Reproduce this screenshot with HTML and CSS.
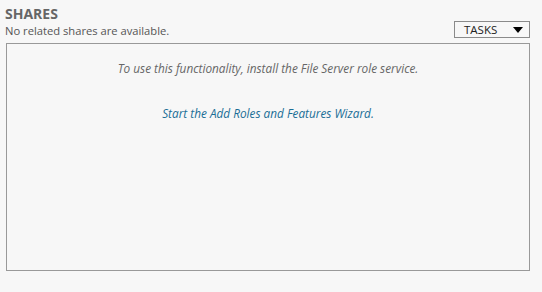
FILE: index.html
```html
<!DOCTYPE html>
<html>
<head>
<meta charset="utf-8">
<link rel="stylesheet" href="styles.css">
</head>
<body>
<div class="panel">
  <div class="header">
    <div class="titles">
      <div class="title">SHARES</div>
      <div class="subtitle">No related shares are available.</div>
    </div>
    <div class="tasks">
      <span class="tasks-label">TASKS</span>
      <svg class="caret" width="10" height="6" viewBox="0 0 10 6"><path d="M0 0H10L5 6Z" fill="#000"/></svg>
    </div>
  </div>
  <div class="box">
    <p class="note">To use this functionality, install the File Server role service.</p>
    <p class="link">Start the Add Roles and Features Wizard.</p>
  </div>
</div>
</body>
</html>
```
FILE: styles.css
```css
html, body {
  margin: 0;
  padding: 0;
  background: #f7f7f7;
  font-family: "Open Sans", "Noto Sans", sans-serif;
}
.panel {
  width: 525px;
  padding: 5px 0 0 5px;
}
.header {
  display: flex;
  justify-content: space-between;
  align-items: flex-end;
}
.title {
  font-size: 14px;
  font-weight: 700;
  color: #666;
  line-height: 18px;
}
.subtitle {
  font-size: 11.2px;
  color: #555;
  line-height: 15px;
}
.tasks {
  height: 15px;
  width: 59px;
  border: 1px solid #8a8a8a;
  display: flex;
  align-items: center;
  justify-content: space-between;
  padding: 0 6px 0 9px;
  box-sizing: content-box;
}
.tasks-label {
  font-size: 11.5px;
  color: #222;
  line-height: 15px;
}
.box {
  margin-top: 5px;
  margin-left: 1px;
  height: 226px;
  border: 1px solid #999;
  text-align: center;
}
.note {
  margin: 17px 0 0;
  font-size: 11.8px;
  font-style: italic;
  color: #666;
  line-height: 15px;
}
.link {
  margin: 30px 0 0;
  font-size: 11.8px;
  font-style: italic;
  color: #1a6e96;
  line-height: 15px;
}
```
